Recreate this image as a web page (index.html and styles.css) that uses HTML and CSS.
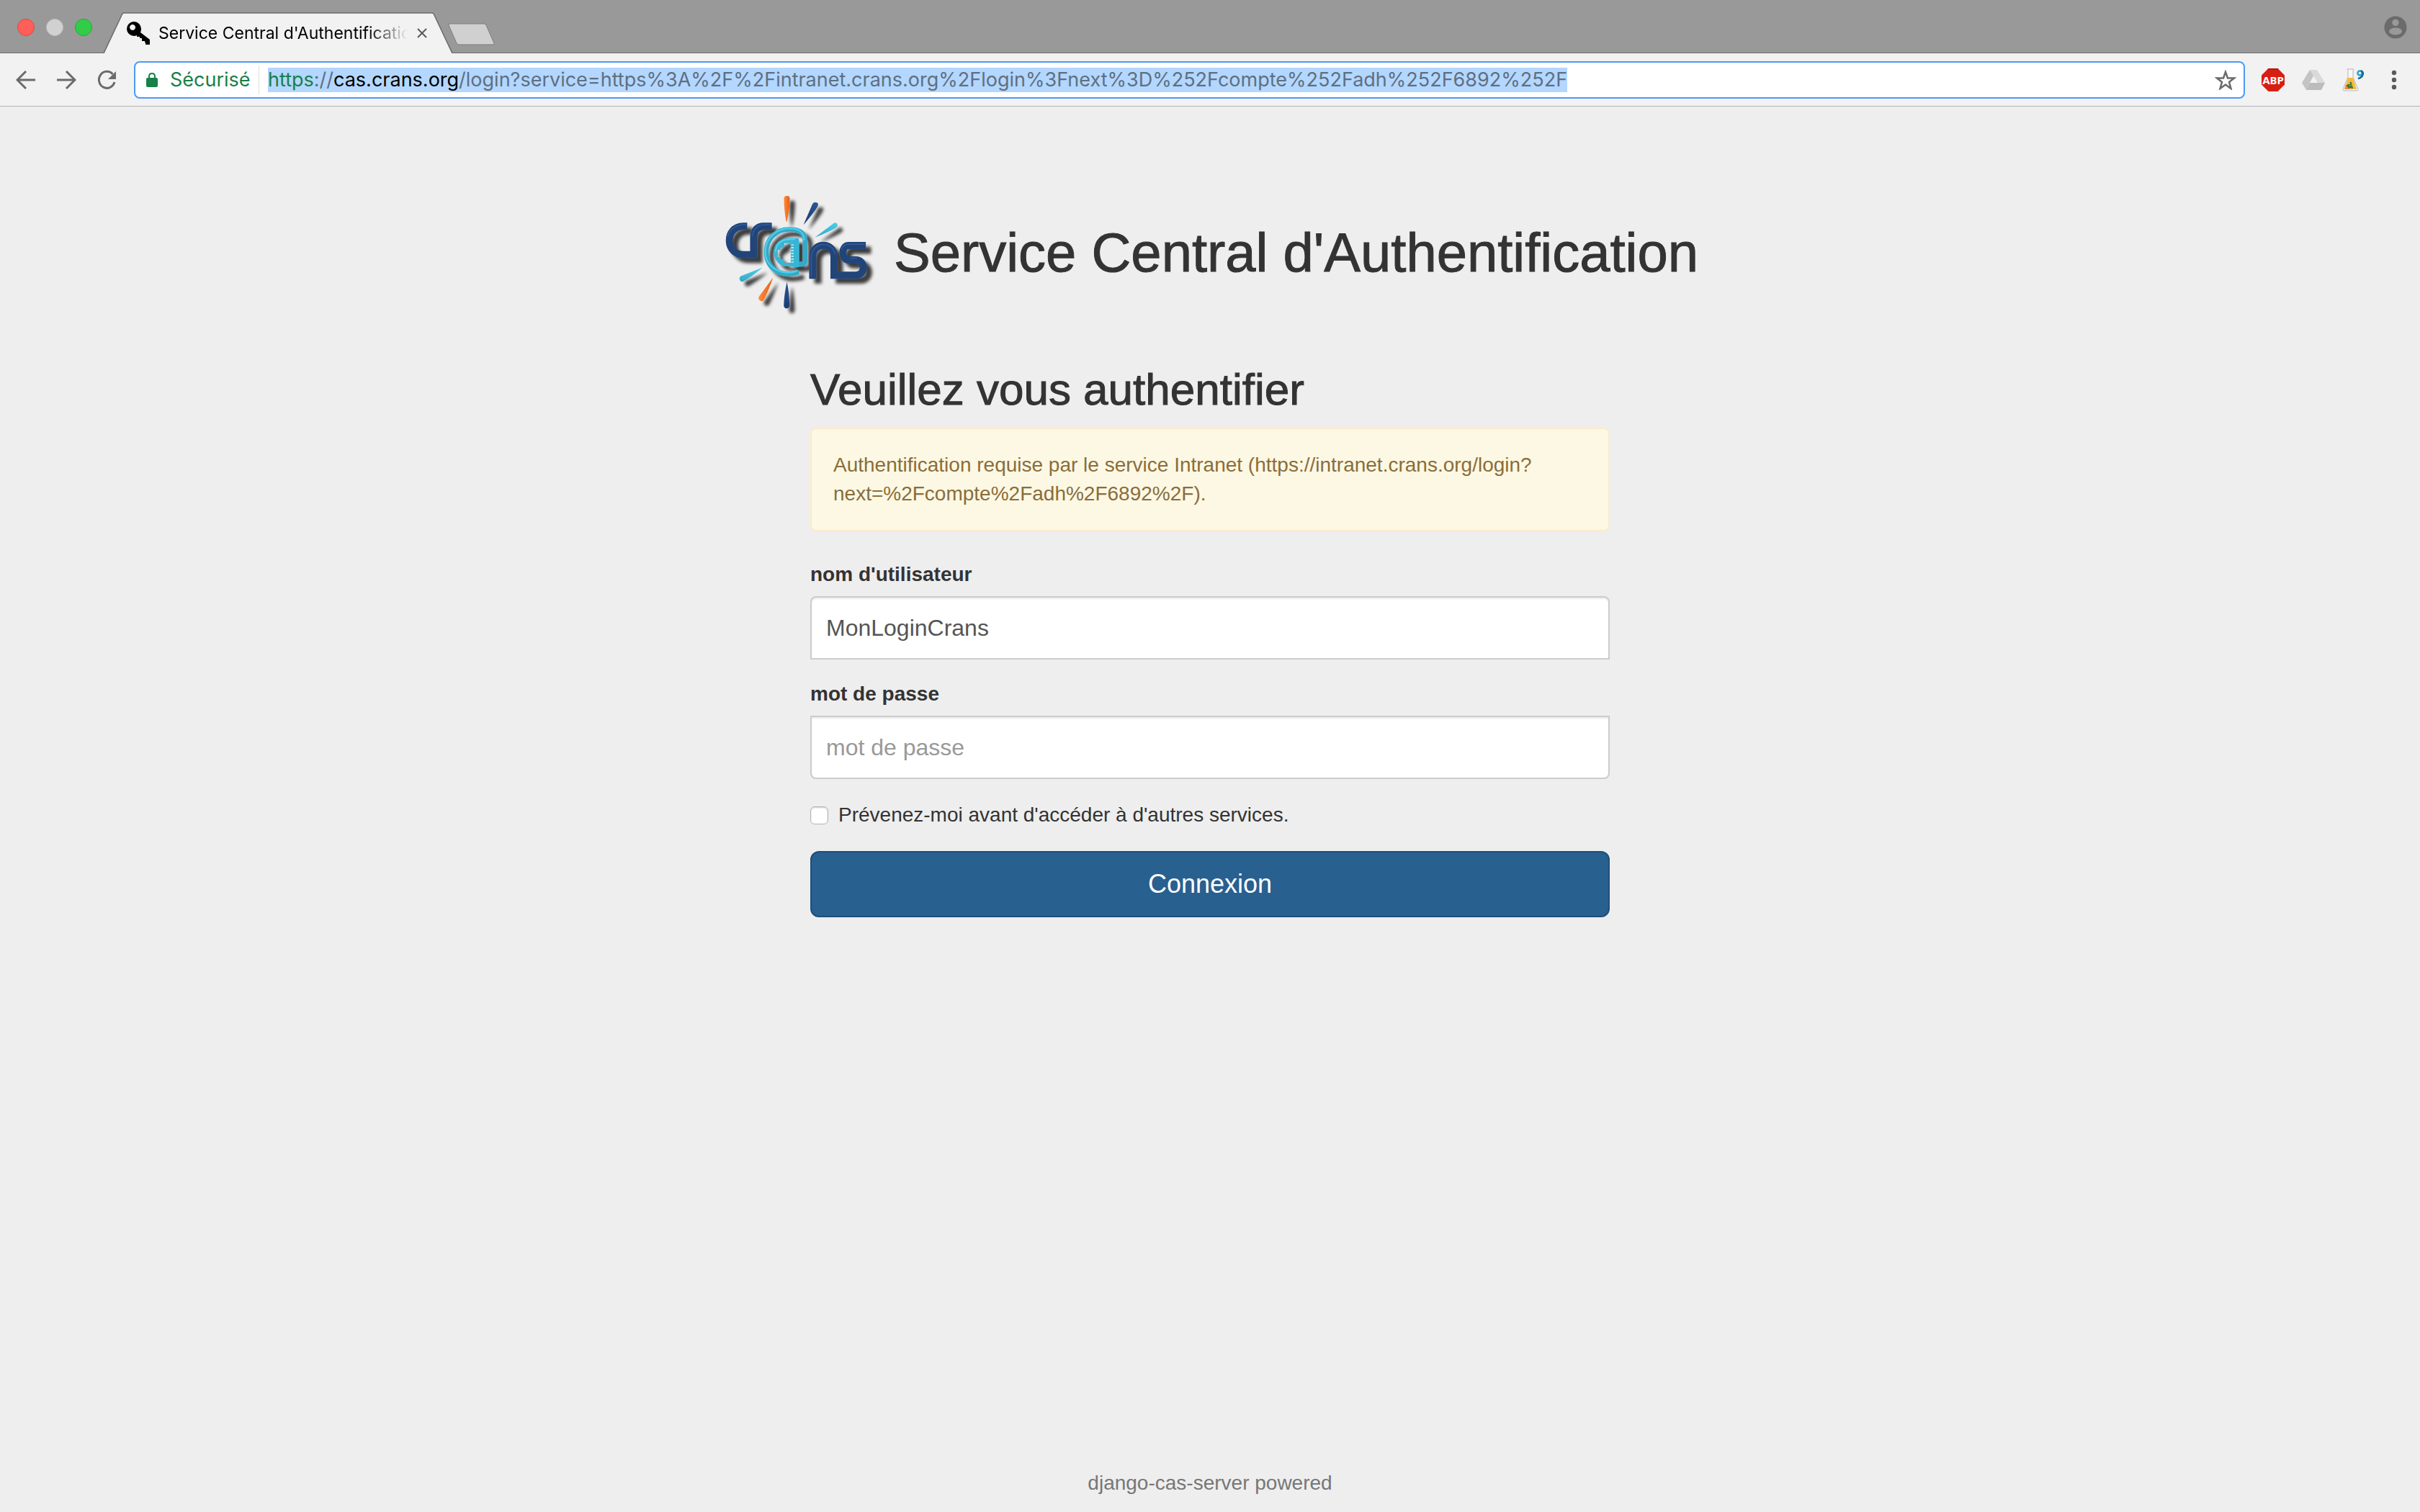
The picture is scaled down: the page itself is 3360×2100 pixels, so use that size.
FILE: index.html
```html
<!DOCTYPE html>
<html lang="fr">
<head>
<meta charset="utf-8">
<title>Service Central d'Authentification</title>
<link rel="stylesheet" href="styles.css">
</head>
<body>
<header class="browser">
  <div class="tabstrip">
    <div class="lights">
      <span class="light close"></span><span class="light mini"></span><span class="light full"></span>
    </div>
    <div class="tab">
      <svg class="tab-shape" viewBox="0 0 484 57" preserveAspectRatio="none" aria-hidden="true"><path d="M0 57L26 2Q27 1 29 1H455Q457 1 458 2L484 57" fill="#f2f2f2" stroke="#6b6b6b" stroke-width="1.5"/></svg>
      <svg class="key" viewBox="0 0 32 32" aria-hidden="true"><path fill-rule="evenodd" d="M10 0A10 10 0 0 1 20 10Q20 13 19 15L32 25V32H26V29H25V27H21V23H18V21H14V19Q12 20 10 20A10 10 0 0 1 10 0ZM8 4A4 4 0 1 0 8.100 4Z"/></svg>
      <span class="tab-title">Service Central d'Authentification</span>
      <button class="tab-close" type="button" aria-label="Fermer l'onglet"><svg viewBox="0 0 14 14"><path d="M1 1L13 13M13 1L1 13" stroke="#5a5a5a" stroke-width="2"/></svg></button>
    </div>
    <button class="new-tab" type="button" aria-label="Nouvel onglet"><svg viewBox="0 0 66 32"><path d="M3 1H50Q52 1 53 3L64 28Q65 30 62 30H16Q13 30 12 28L1 3Q0 1 3 1Z" fill="#d0d0d0" stroke="#7c7c7c"/></svg></button>
    <svg class="account" viewBox="0 0 32 32" aria-label="Compte"><circle cx="16" cy="16" r="15.5" fill="#6b6b6b"/><circle cx="16" cy="9.500" r="4.700" fill="#999"/><ellipse cx="16" cy="21.500" rx="9" ry="5" fill="#999"/></svg>
  </div>
  <nav class="toolbar">
    <button class="nav-btn" type="button" aria-label="Précédent"><svg viewBox="0 0 28 28"><path d="M14 2L2 14L14 26M2 14H27" /></svg></button>
    <button class="nav-btn" type="button" aria-label="Suivant"><svg viewBox="0 0 28 28"><path d="M14 2L26 14L14 26M26 14H1" /></svg></button>
    <button class="nav-btn" type="button" aria-label="Actualiser"><svg viewBox="0 0 28 28"><path d="M22.500 6A11 11.500 0 1 0 25 17"/><path d="M27 2V13H16Z" class="solid"/></svg></button>
    <div class="omnibox">
      <svg class="lock" viewBox="0 0 16 22" aria-hidden="true"><path d="M4 10V6Q4 2 8 2T12 6V10" fill="none" stroke="#188048" stroke-width="2"/><rect y="8" width="16" height="13" rx="2" fill="#188048"/></svg>
      <span class="secure">Sécurisé</span>
      <span class="url"><mark><span class="scheme">https</span>://<span class="host">cas.crans.org</span>/login?service=https%3A%2F%2Fintranet.crans.org%2Flogin%3Fnext%3D%252Fcompte%252Fadh%252F6892%252F</mark></span>
      <svg class="star" viewBox="0 0 30 28" aria-label="Favori"><path d="M15 3L18 11.500H27L20 17L22.500 26L15 20.500L7.500 26L10 17L3 11.500H12Z" fill="none" stroke="#6b6b6b" stroke-width="2.500"/></svg>
    </div>
    <div class="extensions">
      <svg viewBox="0 0 32 32" aria-label="ABP"><path d="M9.500 0H22.500L32 9.500V22.500L22.500 32H9.500L0 22.500V9.500Z" fill="#d81e12"/><path d="M9.500 0H22.500L24 1.500H8Z" fill="#a01810"/><text class="abp" x="16" y="22" text-anchor="middle">ABP</text></svg>
      <svg viewBox="0 0 32 32" aria-label="Drive"><path d="M11 2H21L17 9L6 30L0 20Z" fill="#c4c4c4"/><path d="M11 2H21L32 20H22Z" fill="#dadada"/><path d="M11 20H32L27 30H6Z" fill="#bcbcbc"/><path d="M16 11L21.500 20H11Z" fill="#f2f2f2"/></svg>
      <svg viewBox="0 0 32 32" aria-label="Extension"><path d="M7 1H16L15 3V12L22 29Q22 31 20 31H3Q1 31 1 29L8 12V3Z" fill="#f7f7f7" stroke="#b5b5b5"/><path d="M8 13H15L20 29H3Z" fill="#f3bd3c"/><path d="M5 22L3 29H13Z" fill="#f58a4b"/><path d="M11 19Q15 22 9 23T15 27M8 27L14 24" fill="none" stroke="#32733a" stroke-width="2"/><circle cx="24.500" cy="6.500" r="3" fill="none" stroke="#2aa3cc" stroke-width="2.500"/><path d="M26 3Q30 5 28.500 9T22 14" fill="none" stroke="#12698f" stroke-width="2.500"/></svg>
      <svg viewBox="0 0 32 32" aria-label="Menu"><g fill="#5a5a5a"><circle cx="16" cy="6" r="3.200"/><circle cx="16" cy="16" r="3.200"/><circle cx="16" cy="26" r="3.200"/></g></svg>
    </div>
  </nav>
</header>
<main class="page">
  <div class="brand">
    <svg class="logo" viewBox="70 54 640 500" aria-label="cr@ns">
      <defs>
        <filter id="shadow" x="-20%" y="-20%" width="150%" height="150%"><feDropShadow dx="22" dy="20" stdDeviation="7" flood-color="#000" flood-opacity=".75"/></filter>
        <linearGradient id="navy" x1="0" y1="0" x2="0" y2="1"><stop offset="0" stop-color="#2b5592"/><stop offset="1" stop-color="#1b3d72"/></linearGradient>
        <linearGradient id="cyan" x1="0" y1="0" x2="0" y2="1"><stop offset="0" stop-color="#49d0ec"/><stop offset="1" stop-color="#35a5c4"/></linearGradient>
        <linearGradient id="orange"><stop offset="0" stop-color="#ff8a35"/><stop offset="1" stop-color="#e5601a"/></linearGradient>
      </defs>
      <g filter="url(#shadow)">
        <path d="M330 76Q331 66 342 66T354 76Q354 120 342 174H339Q329 120 330 76Z" fill="url(#orange)"/>
        <path d="M411 188L449 100Q455 90 466 94T470 111Q460 130 411 188Z" fill="url(#navy)"/>
        <path d="M459 240L536 182Q546 174 552 183T547 199Q520 216 459 240Z" fill="url(#cyan)"/>
        <path d="M241 366L149 402Q141 407 145 418T160 424Q190 408 241 366Z" fill="url(#cyan)"/>
        <path d="M284 408L225 488Q221 500 231 505T247 499Q265 464 284 408Z" fill="url(#orange)"/>
        <path d="M342 426Q330 480 329 526Q331 537 341 537T353 526Q352 470 342 426Z" fill="url(#navy)"/>
        <path d="M176 193H160C82 193 82 312 160 312H203V240C203 208 220 193 245 193H279" fill="none" stroke="#214479" stroke-width="30"/>
        <path d="M172 187H160C128 187 102 206 94 236M275 187H247C220 187 200 205 198 235" fill="none" stroke="#30599a" stroke-width="5"/>
        <path d="M450 413V318C450 258 539 258 539 318V398H630C672 398 672 334 630 334H600C568 334 568 274 600 274H672" fill="none" stroke="#214479" stroke-width="30"/>
        <path d="M444 405V318C450 260 530 250 544 310M570 290C575 270 590 268 602 268H668M606 327H635" fill="none" stroke="#30599a" stroke-width="5"/>
        <path d="M392 385C318 412 256 370 256 300C256 242 300 206 352 206C400 206 418 226 418 252V338Q418 352 404 352H386" fill="none" stroke="#35a9c8" stroke-width="20"/>
        <path d="M386 380C322 403 252 366 252 300C252 240 300 202 352 202C400 202 414 222 414 252" fill="none" stroke="#4bd2ee" stroke-width="6"/>
        <path d="M374 243H386Q393 243 393 252V364H376Q350 358 330 360C304 354 288 330 288 302C288 264 318 238 374 243ZM358 264H331V283H316V293H304V321H316V332H330V346H358Z" fill="#38b5d4" fill-rule="evenodd"/>
        <path d="M360 271H370M360 283H370M360 295H370M360 307H370M360 319H370M360 331H370M360 343H370" stroke="#e8f4f6" stroke-width="4"/>
        <path d="M295 300C295 270 318 249 352 248H376" fill="none" stroke="#54d7ee" stroke-width="5"/>
      </g>
    </svg>
    <h1>Service Central d'Authentification</h1>
  </div>
  <form class="login">
    <h2>Veuillez vous authentifier</h2>
    <p class="alert">Authentification requise par le service Intranet (https://intranet.crans.org/login?<wbr>next=%2Fcompte%2Fadh%2F6892%2F).</p>
    <div class="field">
      <label for="username">nom d'utilisateur</label>
      <input class="control first" id="username" type="text" value="MonLoginCrans">
    </div>
    <div class="field">
      <label for="password">mot de passe</label>
      <input class="control last" id="password" type="password" placeholder="mot de passe">
    </div>
    <div class="check">
      <input id="warn" type="checkbox">
      <label for="warn">Prévenez-moi avant d'accéder à d'autres services.</label>
    </div>
    <button class="submit" type="button">Connexion</button>
  </form>
  <footer class="footer"><a href="#">django-cas-server powered</a></footer>
</main>
</body>
</html>
```
FILE: styles.css
```css
* { box-sizing: border-box; }
body {
  margin: 0;
  min-height: 100vh;
  display: flex;
  flex-direction: column;
  background: #eee;
  color: #333;
  font: 28px/40px "Liberation Sans", Arial, sans-serif;
}
button { font: inherit; border: 0; background: none; padding: 0; }
svg { display: block; flex: none; }

/* Browser window */
.browser { font-family: Inter, sans-serif; background: #f2f2f2; border-bottom: 1px solid #b3b3b3; }
.tabstrip {
  display: flex;
  height: 74px;
  padding: 0 18px 0 24px;
  background: #999;
  border-bottom: 1px solid #6b6b6b;
}
.lights { display: flex; align-items: center; gap: 16px; padding-top: 2px; }
.light { width: 24px; height: 24px; border-radius: 50%; border: 1px solid; }
.close { background: #ff5f58; border-color: #e2463f; }
.mini { background: #d1d1d1; border-color: #bdbdbd; }
.full { background: #33cc48; border-color: #22aa35; }
.tab {
  position: relative;
  display: flex;
  align-items: center;
  width: 484px;
  height: 57px;
  margin: 17px 0 0 16px;
  padding: 0 35px 0 32px;
}
.tab-shape { position: absolute; left: 0; top: 0; width: 484px; height: 57px; }
.key { position: relative; width: 32px; height: 32px; }
.tab-title {
  position: relative;
  flex: 1;
  margin-left: 12px;
  overflow: hidden;
  white-space: nowrap;
  font-size: 23px;
  line-height: 32px;
  color: #000;
  -webkit-mask-image: linear-gradient(to right, #000 290px, transparent 346px);
  mask-image: linear-gradient(to right, #000 290px, transparent 346px);
}
.tab-close { position: relative; width: 14px; height: 14px; margin-left: 10px; }
.new-tab { width: 66px; height: 32px; margin: 32px 0 0 -6px; }
.account { width: 32px; height: 32px; margin: 22px 0 0 auto; }

.toolbar { display: flex; align-items: center; height: 73px; padding: 0 20px 0 22px; }
.nav-btn { width: 28px; height: 28px; margin-right: 28px; }
.nav-btn path { fill: none; stroke: #6b6b6b; stroke-width: 3; }
.nav-btn .solid { fill: #6b6b6b; stroke: none; }
.nav-btn:nth-child(3) { margin-right: 24px; }
.omnibox {
  flex: 1;
  min-width: 0;
  display: flex;
  align-items: center;
  height: 52px;
  padding: 0 10px 0 15px;
  background: #fff;
  border: 2px solid #4a9bf5;
  border-radius: 8px;
  font-size: 27px;
}
.lock { width: 16px; height: 22px; }
.secure { width: 124px; margin-left: 17px; color: #188048; border-right: 1px solid #e0e0e0; }
.url { flex: 1; display: flex; min-width: 0; margin-left: 12px; overflow: hidden; white-space: nowrap; }
.url mark { line-height: 34px; background: #b3d7ff; color: #5f6f82; }
.url .scheme { color: #188048; }
.url .host { color: #000; }
.star { width: 30px; height: 28px; }
.extensions { display: flex; gap: 24px; margin-left: 23px; }
.extensions svg { width: 32px; height: 32px; }
.abp { font: bold 15px "Noto Sans", sans-serif; fill: #fff; }

/* Login page */
.page { flex: 1; display: flex; flex-direction: column; align-items: center; padding: 120px 30px 20px; }
.brand { display: flex; align-items: center; gap: 26px; }
.logo { width: 213px; height: 166px; overflow: visible; }
h1 { margin: 0; font-size: 76px; line-height: 80px; font-weight: 500; -webkit-text-stroke: 1px #333; }
h2 { margin: 0 0 20px; font-size: 62px; line-height: 66px; font-weight: 500; -webkit-text-stroke: 1px #333; }
.login { width: 100%; max-width: 1110px; margin-top: 74px; }
.alert {
  margin: 0 0 40px;
  padding: 30px;
  border: 2px solid #faebcc;
  border-radius: 8px;
  background: #fcf8e3;
  color: #8a6d3b;
}
.field { margin-bottom: 28px; }
.field label { display: block; margin-bottom: 10px; font-weight: bold; }
.control {
  display: block;
  width: 100%;
  height: 88px;
  padding: 20px;
  border: 2px solid #ccc;
  border-radius: 8px;
  background: #fff;
  box-shadow: inset 0 2px 2px rgba(0, 0, 0, .08);
  color: #555;
  font: 32px "Liberation Sans", Arial, sans-serif;
}
.control::placeholder { color: #999; opacity: 1; }
.first { border-bottom-left-radius: 0; border-bottom-right-radius: 0; }
.last { border-top-left-radius: 0; border-top-right-radius: 0; }
.check { display: flex; align-items: center; gap: 14px; margin: 30px 0; }
.check input {
  appearance: none;
  width: 25px;
  height: 25px;
  margin: 0;
  border: 1px solid #b4b4b4;
  border-radius: 6px;
  background: #fff;
  box-shadow: inset 0 1px 2px rgba(0, 0, 0, .2);
}
.submit {
  display: block;
  width: 100%;
  height: 92px;
  border: 2px solid #1f4f7a;
  border-radius: 12px;
  background: #286090;
  color: #fff;
  font-size: 36px;
}
.footer { margin-top: auto; }
.footer a { color: #777; text-decoration: none; }
```
